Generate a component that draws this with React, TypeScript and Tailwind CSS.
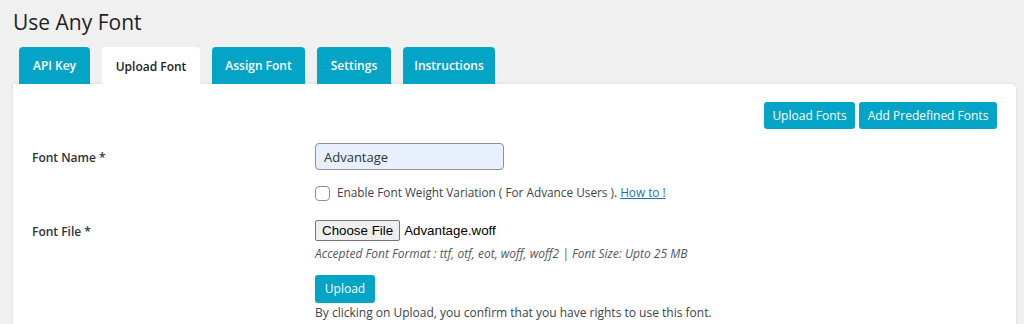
import React from 'react';

const tabs = [
  { label: 'API Key', w: 'w-[71px]' },
  { label: 'Upload Font', w: 'w-[98px]', active: true },
  { label: 'Assign Font', w: 'w-[93px]' },
  { label: 'Settings', w: 'w-[74px]' },
  { label: 'Instructions', w: 'w-[92px]' },
];

export default function App() {
  return (
    <div className="w-[1024px] h-[324px] overflow-hidden bg-[#f0f0f1] font-['Open_Sans',sans-serif] text-[#3c434a]">
      <div className="pl-[13px] pr-[8px]">
        <h1 className="pt-[8px] h-[47px] text-[21px] leading-[29px] text-[#1d2327] font-normal">Use Any Font</h1>

        {/* tabs */}
        <div className="flex gap-[12px] pl-[6px] h-[37px] relative z-10">
          {tabs.map((t) => (
            <div
              key={t.label}
              className={`${t.w} flex items-center justify-center pt-[1px] rounded-t-[4px] text-[12px] font-semibold ${
                t.active ? 'bg-white text-[#1d2327] h-[38px]' : 'bg-[#04a4c7] text-white h-[37px]'
              }`}
            >
              {t.label}
            </div>
          ))}
        </div>

        {/* panel */}
        <div className="bg-white rounded-tr-[5px] shadow-[0_0_3px_rgba(0,0,0,0.12)] h-[260px] pl-[19px] pr-[19px] pt-[18px]">
          <div className="flex justify-end gap-[4px]">
            <button className="w-[91px] h-[27px] bg-[#04a4c7] text-white text-[12px] rounded-[3px]">Upload Fonts</button>
            <button className="w-[138px] h-[27px] bg-[#04a4c7] text-white text-[12px] rounded-[3px]">Add Predefined Fonts</button>
          </div>

          <div className="flex mt-[14px]">
            <div className="w-[283px] pt-[6px] text-[12px] font-semibold text-[#2c3338]">Font Name *</div>
            <div className="flex flex-col">
              <input
                readOnly
                value="Advantage"
                className="w-[189px] h-[27px] px-[8px] bg-[#e8f0fe] border border-[#8c8f94] rounded-[4px] text-[13px] text-[#2c3338] outline-none"
              />
              <label className="flex items-center mt-[15px] h-[16px] text-[11.8px] text-[#3c434a]">
                <span className="w-[15px] h-[15px] border border-[#8c8f94] rounded-[4px] bg-white mr-[7px]" />
                Enable Font Weight Variation ( For Advance Users ).&nbsp;
                <span className="text-[#2271b1] underline">How to !</span>
              </label>
            </div>
          </div>

          <div className="flex mt-[19px]">
            <div className="w-[283px] pt-[3px] text-[12px] font-semibold text-[#2c3338]">Font File *</div>
            <div className="flex flex-col">
              <div className="flex items-center h-[21px]">
                <span className="h-[21px] px-[6px] flex items-center bg-[#efefef] border border-[#767676] rounded-[2px] font-['Liberation_Sans',Arial,sans-serif] text-[13.333px] text-black">Choose File</span>
                <span className="ml-[4px] font-['Liberation_Sans',Arial,sans-serif] text-[13.333px] text-black">Advantage.woff</span>
              </div>
              <div className="mt-[4px] text-[12px] italic text-[#50575e]">Accepted Font Format : ttf, otf, eot, woff, woff2 | Font Size: Upto 25 MB</div>
              <button className="mt-[12px] w-[60px] h-[28px] bg-[#04a4c7] text-white text-[12px] rounded-[3px]">Upload</button>
              <div className="mt-[1px] text-[12px] leading-[18px] text-[#3c434a]">By clicking on Upload, you confirm that you have rights to use this font.</div>
            </div>
          </div>
        </div>
      </div>
    </div>
  );
}
